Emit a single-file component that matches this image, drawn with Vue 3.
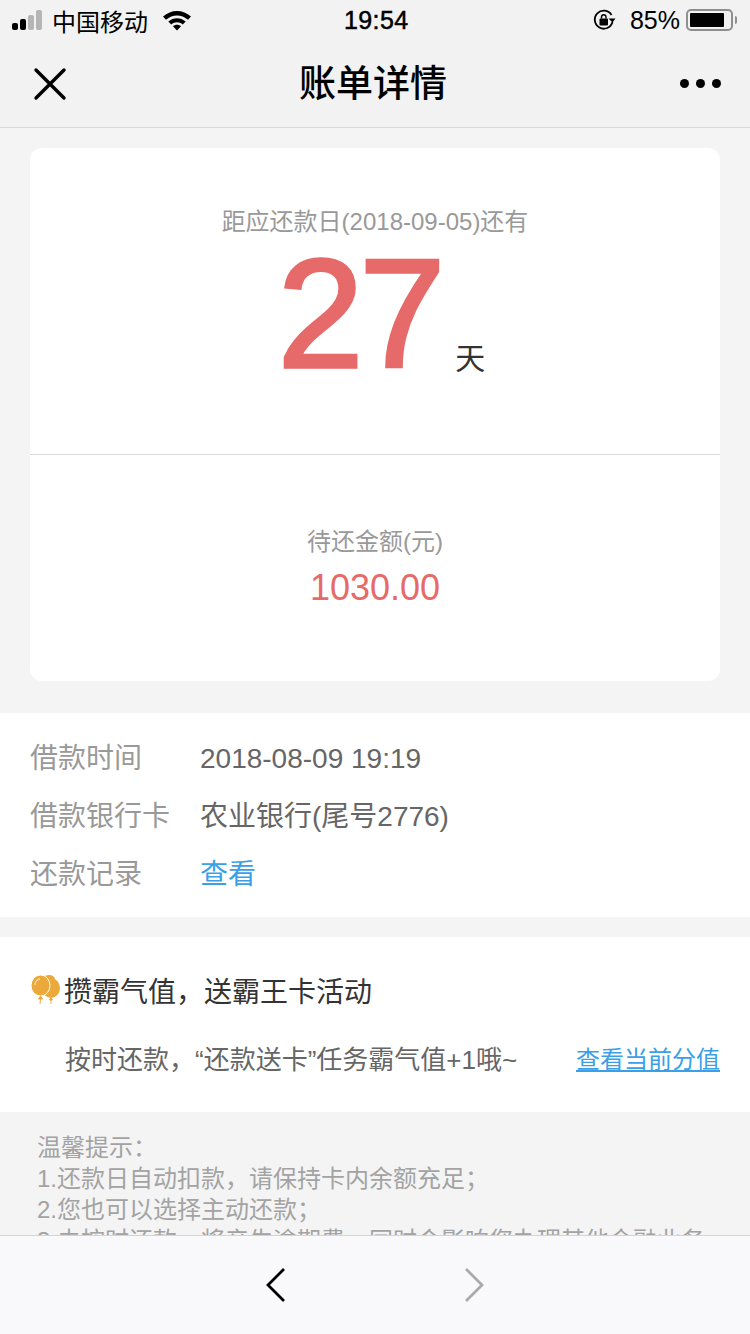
<template>
  <div class="page">
    <div class="status-bar">
      <div class="status-left">
        <div class="signal">
          <i class="on h1"></i><i class="on h2"></i><i class="h3"></i><i class="h4"></i>
        </div>
        <span class="carrier">中国移动</span>
        <svg class="wifi" width="30" height="22" viewBox="0 0 30 22">
          <path d="M1 7.5 C9 0 21 0 29 7.5 L26 10.7 C19.5 5 10.5 5 4 10.7 Z" fill="#000" />
          <path d="M6.3 12.6 C11.5 8 18.5 8 23.7 12.6 L20.8 15.6 C17.2 12.6 12.8 12.6 9.2 15.6 Z" fill="#000" />
          <path d="M11 17.2 C13.4 15.2 16.6 15.2 19 17.2 L15 21.4 Z" fill="#000" />
        </svg>
      </div>
      <span class="clock">19:54</span>
      <div class="status-right">
        <svg class="lock" width="24" height="24" viewBox="0 0 24 24">
          <path d="M20.5 14 A9 9 0 1 1 19.5 7" fill="none" stroke="#000" stroke-width="1.8" />
          <path d="M16.5 10.5 L23.5 10.5 L20.5 14.5 Z" fill="#000" />
          <rect x="7.5" y="10.5" width="8.5" height="7" rx="1" fill="#000" />
          <path d="M9.5 10.5 V9 A2.2 2.2 0 0 1 14 9 V10.5" fill="none" stroke="#000" stroke-width="1.4" />
        </svg>
        <span class="battery-text">85%</span>
        <div class="battery"><div class="battery-fill"></div></div>
        <div class="battery-cap"></div>
      </div>
    </div>

    <div class="nav-bar">
      <svg class="close" width="34" height="34" viewBox="0 0 34 34">
        <path d="M3 3 L31 31 M31 3 L3 31" stroke="#000" stroke-width="3.4" stroke-linecap="round" />
      </svg>
      <span class="nav-title">账单详情</span>
      <div class="more"><i></i><i></i><i></i></div>
    </div>

    <div class="card">
      <div class="card-top">
        <p class="due-label">距应还款日(2018-09-05)还有</p>
        <div class="days">
          <span class="days-num">27</span>
          <span class="days-unit">天</span>
        </div>
      </div>
      <div class="card-bottom">
        <p class="amount-label">待还金额(元)</p>
        <p class="amount">1030.00</p>
      </div>
    </div>

    <div class="info">
      <div v-for="row in rows" :key="row.label" class="info-row">
        <span class="info-label">{{ row.label }}</span>
        <span class="info-value" :class="{ link: row.link }">{{ row.value }}</span>
      </div>
    </div>

    <div class="promo">
      <div class="promo-title">
        <svg class="balloon" width="32" height="32" viewBox="0 0 32 32">
          <ellipse cx="21" cy="14" rx="9" ry="10" fill="#eba93c" />
          <ellipse cx="19" cy="5.5" rx="6" ry="4.5" fill="#eba93c" />
          <ellipse cx="10.5" cy="11.5" rx="9.5" ry="10.5" fill="#eba93c" stroke="#fff" stroke-width="1" />
          <path d="M5 11 A6 6 0 0 1 10 5" fill="none" stroke="#f8dca8" stroke-width="1.4" />
          <path d="M10.5 22 L8.5 25 H12.5 Z M10.5 25 L10 30 M21 24 L19.5 26 H22.5 Z M21 26 L21 30" fill="#eba93c" stroke="#eba93c" stroke-width="1" />
        </svg>
        <span>攒霸气值，送霸王卡活动</span>
      </div>
      <div class="promo-row">
        <span class="promo-text">按时还款，“还款送卡”任务霸气值+1哦~</span>
        <a class="promo-link">查看当前分值</a>
      </div>
    </div>

    <div class="tips">
      <p>温馨提示：</p>
      <p>1.还款日自动扣款，请保持卡内余额充足；</p>
      <p>2.您也可以选择主动还款；</p>
      <p>3.未按时还款，将产生逾期费，同时会影响您办理其他金融业务。</p>
    </div>

    <div class="bottom-bar">
      <svg width="22" height="36" viewBox="0 0 22 36">
        <path d="M19 2 L3 18 L19 34" fill="none" stroke="#000" stroke-width="2.8" />
      </svg>
      <svg width="22" height="36" viewBox="0 0 22 36">
        <path d="M3 2 L19 18 L3 34" fill="none" stroke="#aaa" stroke-width="2.8" />
      </svg>
    </div>
  </div>
</template>

<script setup>
const rows = [
  { label: '借款时间', value: '2018-08-09 19:19' },
  { label: '借款银行卡', value: '农业银行(尾号2776)' },
  { label: '还款记录', value: '查看', link: true }
]
</script>

<style>
html, body {
  margin: 0;
  background: #f4f4f4;
}
</style>

<style scoped>
.page {
  position: relative;
  width: 750px;
  height: 1334px;
  overflow: hidden;
  background: #f4f4f4;
  font-family: "Liberation Sans", "Noto Sans CJK SC", sans-serif;
}
p { margin: 0; }
.status-bar {
  height: 40px;
  background: #f2f2f2;
  display: flex;
  align-items: center;
  justify-content: space-between;
  padding: 0 13px 0 12px;
  position: relative;
  color: #000;
}
.status-left, .status-right {
  display: flex;
  align-items: center;
}
.signal {
  display: flex;
  align-items: flex-end;
  gap: 2px;
  width: 34px;
}
.signal i {
  width: 6px;
  background: #b5b5b5;
  border-radius: 2px;
}
.signal i.on { background: #000; }
.signal .h1 { height: 7px; }
.signal .h2 { height: 11px; }
.signal .h3 { height: 15px; }
.signal .h4 { height: 20px; }
.carrier {
  font-size: 24px;
  margin-left: 6px;
}
.wifi { margin-left: 14px; }
.clock {
  position: absolute;
  left: 344px;
  top: 5px;
  font-size: 25px;
  line-height: 30px;
  -webkit-text-stroke: 0.5px #000;
  letter-spacing: 0.4px;
}
.lock { margin-right: 1px; }
.battery-text {
  font-size: 25px;
  margin-left: 13px;
}
.battery {
  width: 47px;
  height: 22px;
  margin-left: 6px;
  border: 2px solid #8f8f8f;
  border-radius: 5px;
  padding: 2px;
  box-sizing: border-box;
  display: flex;
}
.battery-fill {
  width: 34px;
  background: #000;
  border-radius: 1px;
}
.battery-cap {
  width: 2px;
  height: 8px;
  margin-left: 2px;
  background: #8f8f8f;
  border-radius: 0 2px 2px 0;
}
.nav-bar {
  height: 87px;
  background: #f2f2f2;
  border-bottom: 1px solid #d8d8d8;
  display: flex;
  align-items: center;
  justify-content: space-between;
  padding: 0 29px 0 33px;
  position: relative;
}
.nav-title {
  position: absolute;
  left: 0;
  right: 4px;
  top: 22px;
  text-align: center;
  font-size: 37px;
  line-height: 46px;
  font-weight: 500;
  color: #000;
}
.more {
  display: flex;
  gap: 7px;
}
.more i {
  width: 9px;
  height: 9px;
  border-radius: 50%;
  background: #000;
}
.card {
  margin: 20px 30px 0;
  background: #fff;
  border-radius: 12px;
  height: 533px;
  display: flex;
  flex-direction: column;
}
.card-top {
  height: 307px;
  box-sizing: border-box;
  border-bottom: 1px solid #d9d9d9;
  padding-top: 58px;
  text-align: center;
}
.due-label {
  font-size: 24px;
  line-height: 32px;
  color: #999;
}
.days {
  display: flex;
  justify-content: center;
  align-items: flex-end;
  margin-top: 20px;
  padding-left: 13px;
}
.days-num {
  font-size: 154px;
  line-height: 112px;
  letter-spacing: -4px;
  -webkit-text-stroke: 3.5px #e66a69;
  color: #e66a69;
}
.days-unit {
  font-size: 30px;
  line-height: 36px;
  color: #333;
  margin-left: 14px;
  margin-bottom: -7px;
}
.card-bottom {
  padding-top: 70px;
  text-align: center;
}
.amount-label {
  font-size: 24px;
  line-height: 34px;
  color: #999;
}
.amount {
  font-size: 36px;
  line-height: 58px;
  color: #e66a69;
}
.info {
  margin-top: 32px;
  background: #fff;
  height: 204px;
  box-sizing: border-box;
  padding: 17px 30px 0;
}
.info-row {
  display: flex;
  height: 58px;
  line-height: 58px;
}
.info-label {
  width: 170px;
  font-size: 28px;
  color: #999;
}
.info-value {
  font-size: 28px;
  color: #666;
}
.info-value.link { color: #3b9fe8; }
.promo {
  margin-top: 20px;
  background: #fff;
  height: 175px;
  box-sizing: border-box;
  padding: 38px 30px 0;
}
.promo-title {
  display: flex;
  align-items: center;
  font-size: 28px;
  line-height: 36px;
  color: #333;
}
.balloon {
  margin-right: 2px;
  transform: translateY(-3px);
}
.promo-row {
  display: flex;
  justify-content: space-between;
  align-items: center;
  margin-top: 28px;
  padding-left: 35px;
}
.promo-text {
  font-size: 26px;
  color: #666;
}
.promo-link {
  font-size: 24px;
  color: #3b9fe8;
  text-decoration: underline;
}
.tips {
  padding: 20px 37px 0;
  font-size: 24px;
  line-height: 31px;
  color: #a3a3a3;
  white-space: nowrap;
}
.bottom-bar {
  position: absolute;
  left: 0;
  right: 0;
  bottom: 0;
  height: 98px;
  background: #f9f9fb;
  border-top: 1px solid #d4d4d4;
  display: flex;
  align-items: center;
  justify-content: center;
  gap: 176px;
}
</style>
